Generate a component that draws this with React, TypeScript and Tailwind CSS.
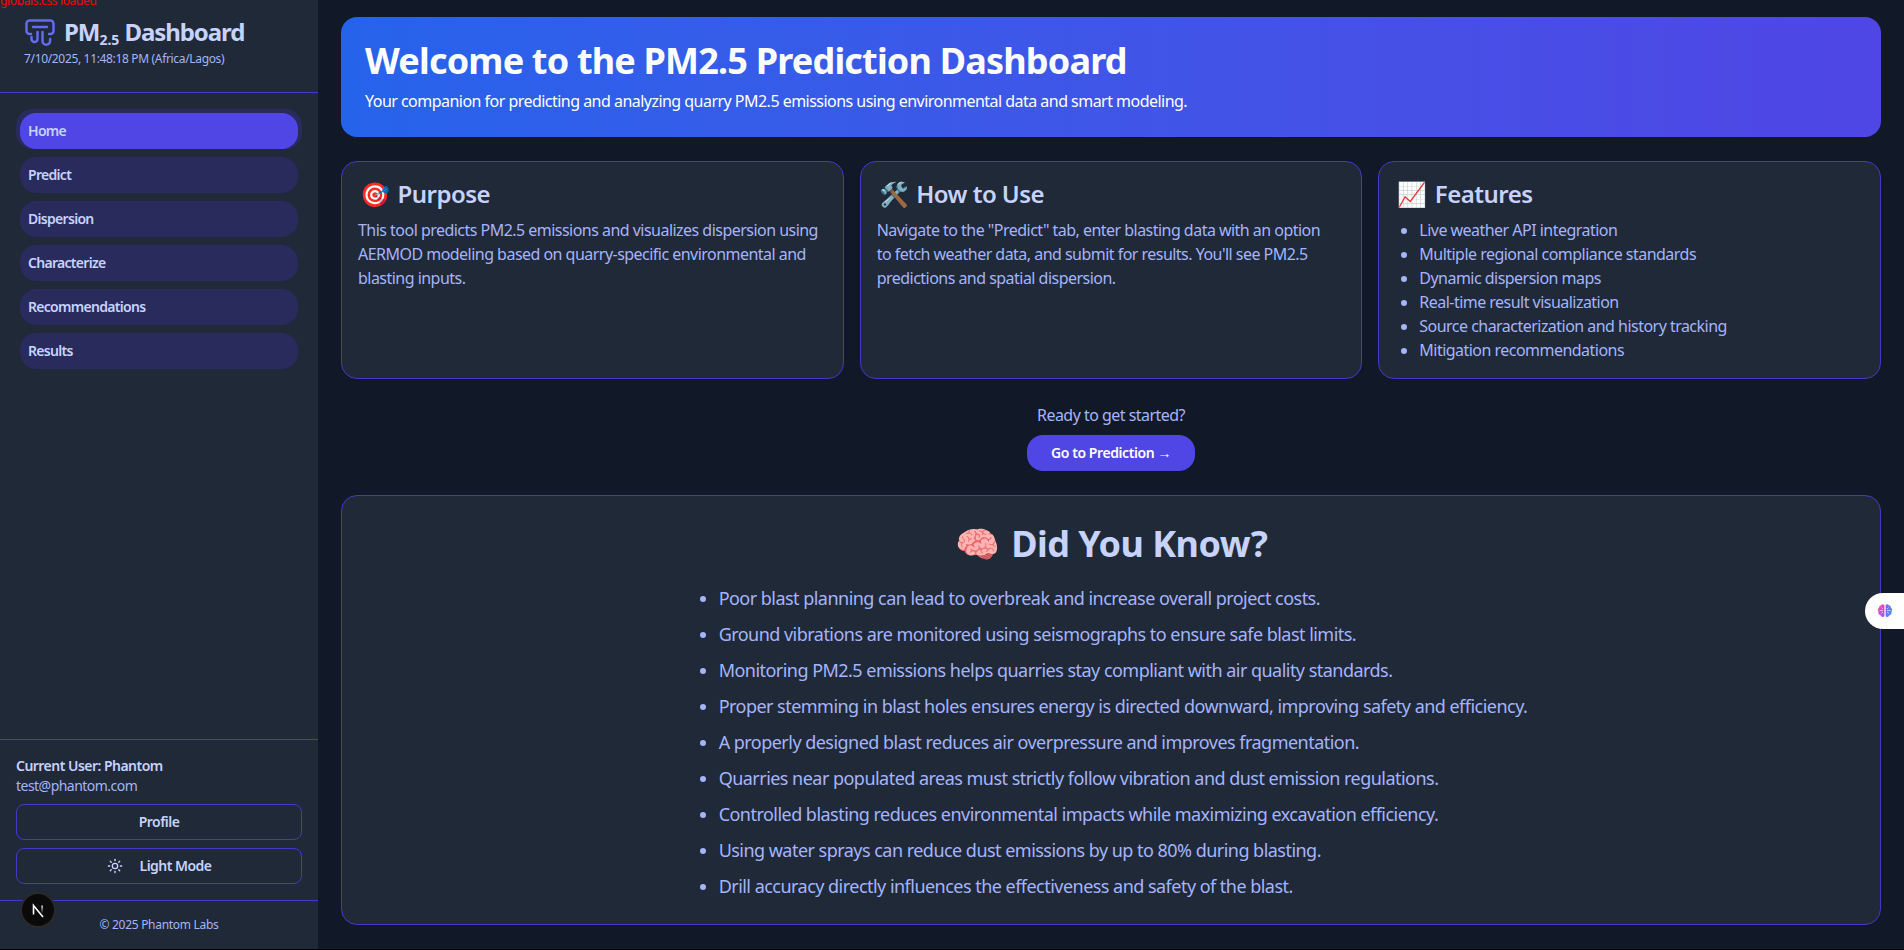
import { Sun } from "lucide-react";

const navItems = ["Home", "Predict", "Dispersion", "Characterize", "Recommendations", "Results"];

const features = [
  "Live weather API integration",
  "Multiple regional compliance standards",
  "Dynamic dispersion maps",
  "Real-time result visualization",
  "Source characterization and history tracking",
  "Mitigation recommendations",
];

const facts = [
  "Poor blast planning can lead to overbreak and increase overall project costs.",
  "Ground vibrations are monitored using seismographs to ensure safe blast limits.",
  "Monitoring PM2.5 emissions helps quarries stay compliant with air quality standards.",
  "Proper stemming in blast holes ensures energy is directed downward, improving safety and efficiency.",
  "A properly designed blast reduces air overpressure and improves fragmentation.",
  "Quarries near populated areas must strictly follow vibration and dust emission regulations.",
  "Controlled blasting reduces environmental impacts while maximizing excavation efficiency.",
  "Using water sprays can reduce dust emissions by up to 80% during blasting.",
  "Drill accuracy directly influences the effectiveness and safety of the blast.",
];

function Logo() {
  return (
    <svg width="30" height="28" viewBox="0 0 30 28" fill="none" stroke="#646bf0" strokeWidth="2.5" strokeLinecap="round" strokeLinejoin="round">
      <path d="M6 15H4.5a3 3 0 0 1-3-3V4.5a3 3 0 0 1 3-3h21a3 3 0 0 1 3 3V12a3 3 0 0 1-3 3H24" />
      <path d="M8 8h14" />
      <path d="M12.5 13v7a3 3 0 0 1-6 0v-2" />
      <path d="M17.5 13v9a3.8 3.8 0 0 0 7.6 0v-2" />
    </svg>
  );
}

function NextMark() {
  return (
    <svg width="18" height="18" viewBox="0 0 18 18" fill="none" strokeWidth="1.6">
      <defs>
        <linearGradient id="nextFade" x1="0" y1="0" x2="0" y2="1">
          <stop offset="0" stopColor="#fff" />
          <stop offset="1" stopColor="#fff" stopOpacity="0" />
        </linearGradient>
      </defs>
      <path d="M4.5 13.500V4.500L14 16" stroke="#fff" />
      <rect x="12.400" y="4.500" width="1.400" height="8" fill="url(#nextFade)" stroke="none" />
    </svg>
  );
}

function BrainMark() {
  return (
    <svg width="16" height="16" viewBox="0 0 16 16">
      <defs>
        <linearGradient id="brainLeft" x1="0" y1="0" x2="0.6" y2="1">
          <stop offset="0" stopColor="#fb923c" />
          <stop offset="0.45" stopColor="#e040c8" />
          <stop offset="1" stopColor="#a855f7" />
        </linearGradient>
        <linearGradient id="brainRight" x1="0" y1="0" x2="1" y2="1">
          <stop offset="0" stopColor="#8b5cf6" />
          <stop offset="1" stopColor="#3b9cf6" />
        </linearGradient>
      </defs>
      <path d="M7.400 2.200C6.600.9 4.600 1 4 2.400 2.600 2.400 1.800 3.600 2.200 4.800 .6 5.600 .4 7.800 1.600 8.800 .9 10.400 2 12 3.400 12.100 3.800 13.900 6.200 14.500 7.400 13.200Z" fill="url(#brainLeft)" />
      <path d="M8.600 2.200C9.400 .9 11.400 1 12 2.400 13.400 2.400 14.200 3.600 13.800 4.800 15.400 5.600 15.600 7.800 14.400 8.800 15.100 10.400 14 12 12.600 12.100 12.200 13.900 9.800 14.500 8.600 13.200Z" fill="url(#brainRight)" />
      <path d="M2.500 7.500H6M4.500 4.500 6 6M4 10.500 6 9M13.500 7.500H10M11.500 4.500 10 6M12 10.500 10 9" stroke="#fff" strokeWidth="0.8" strokeOpacity="0.75" fill="none" />
    </svg>
  );
}

export default function App() {
  return (
    <div className="h-[950px] bg-black">
      <div className="relative flex h-[949px] overflow-hidden bg-[#111827] font-['Noto_Sans','Open_Sans',sans-serif] tracking-[-0.033em]">
        <span className="absolute left-0 top-[-7px] text-xs tracking-[-0.03em] text-[#ff0000]">globals.css loaded</span>

        {/* sidebar */}
        <aside className="flex w-[318px] shrink-0 flex-col bg-[#1f2937]">
          <div className="h-[93px] border-b border-[#4338ca] pl-[25px] pt-[18px]">
            <div className="flex items-center gap-[9px]">
              <Logo />
              <h1 className="-mt-0.5 text-2xl font-bold tracking-[-0.045em] text-[#c7d2fe]">
                PM<sub className="text-sm tracking-normal">2.5</sub> Dashboard
              </h1>
            </div>
            <p className="-ml-[1px] mt-[3px] text-xs tracking-[-0.028em] text-[#a5b4fc]">7/10/2025, 11:48:18 PM (Africa/Lagos)</p>
          </div>

          <nav className="isolate flex flex-1 flex-col gap-2 px-5 pt-5">
            {navItems.map((item, i) => (
              <button
                key={item}
                className={`relative h-9 rounded-2xl px-2 text-left text-sm font-semibold tracking-[-0.05em] text-[#c7d2fe] ${
                  i === 0
                    ? "bg-[#4f46e5] before:absolute before:-inset-x-1 before:-top-1 before:bottom-0 before:-z-10 before:rounded-2xl before:bg-[#282b5c]"
                    : "bg-[#282b5c]"
                }`}
              >
                {item}
              </button>
            ))}
          </nav>

          <div className="border-t border-[#4338ca] px-4 pt-4 pb-4">
            <p className="text-sm font-semibold text-[#c7d2fe]">Current User: Phantom</p>
            <p className="text-sm text-[#a5b4fc]">test@phantom.com</p>
            <button className="mt-2 block h-9 w-full rounded-lg border border-[#4338ca] text-sm font-semibold text-[#c7d2fe]">
              Profile
            </button>
            <button className="mt-2 flex h-9 w-full items-center justify-center gap-[17px] rounded-lg border border-[#4338ca] text-sm font-semibold text-[#c7d2fe]">
              <Sun size={16} />
              Light Mode
            </button>
          </div>

          <div className="border-t border-[#4338ca] py-4 text-center text-xs tracking-tight text-[#a5b4fc]">© 2025 Phantom Labs</div>
        </aside>

        {/* main */}
        <main className="flex-1 px-[23px] pt-[17px]">
          <section className="rounded-2xl bg-gradient-to-r from-[#2563eb] to-[#4f46e5] p-6">
            <h2 className="text-4xl font-bold tracking-[-0.0225em] text-white">Welcome to the PM2.5 Prediction Dashboard</h2>
            <p className="mt-2 text-white">
              Your companion for predicting and analyzing quarry PM2.5 emissions using environmental data and smart modeling.
            </p>
          </section>

          <div className="mt-6 grid grid-cols-3 gap-4">
            <div className="rounded-2xl border border-[#4338ca] bg-[#1f2937] p-4">
              <h3 className="mb-2 text-2xl font-semibold text-[#c7d2fe]">
                <span className="ml-0.5 mr-2">🎯</span>Purpose
              </h3>
              <p className="text-[#a5b4fc]">
                This tool predicts PM2.5 emissions and visualizes dispersion using AERMOD modeling based on quarry-specific environmental and blasting inputs.
              </p>
            </div>
            <div className="rounded-2xl border border-[#4338ca] bg-[#1f2937] p-4">
              <h3 className="mb-2 text-2xl font-semibold text-[#c7d2fe]">
                <span className="ml-0.5 mr-2">🛠️</span>How to Use
              </h3>
              <p className="pr-2 text-[#a5b4fc]">
                Navigate to the "Predict" tab, enter blasting data with an option to fetch weather data, and submit for results. You'll see PM2.5 predictions and spatial dispersion.
              </p>
            </div>
            <div className="rounded-2xl border border-[#4338ca] bg-[#1f2937] p-4">
              <h3 className="mb-2 text-2xl font-semibold text-[#c7d2fe]">
                <span className="ml-0.5 mr-2">📈</span>Features
              </h3>
              <ul className="list-disc pl-6 text-[#a5b4fc]">
                {features.map((f) => (
                  <li key={f}>{f}</li>
                ))}
              </ul>
            </div>
          </div>

          <div className="mt-6 text-center">
            <p className="text-[#a5b4fc]">Ready to get started?</p>
            <button className="mt-2 h-9 w-[168px] rounded-2xl bg-[#4f46e5] text-sm font-semibold tracking-[-0.03em] text-white">Go to Prediction →</button>
          </div>

          <section className="mt-6 rounded-2xl border border-[#4338ca] bg-[#1f2937] p-6">
            <h2 className="mb-5 pt-1 text-center text-4xl font-bold text-[#c7d2fe]">
              <span className="mr-3">🧠</span>Did You Know?
            </h2>
            <ul className="mx-auto flex w-fit list-disc flex-col gap-2 pl-6 text-lg text-[#a5b4fc]">
              {facts.map((f) => (
                <li key={f}>{f}</li>
              ))}
            </ul>
          </section>
        </main>

        {/* dev badge, floating widget */}
        <div className="absolute left-[20px] top-[892px] flex h-9 w-9 items-center justify-center rounded-full border-2 border-[#2a2a2a] bg-[#0a0a0a]">
          <NextMark />
        </div>
        <div className="absolute right-0 top-[593px] flex h-9 w-[39px] items-center rounded-l-full bg-white pl-3">
          <BrainMark />
        </div>
      </div>
    </div>
  );
}
